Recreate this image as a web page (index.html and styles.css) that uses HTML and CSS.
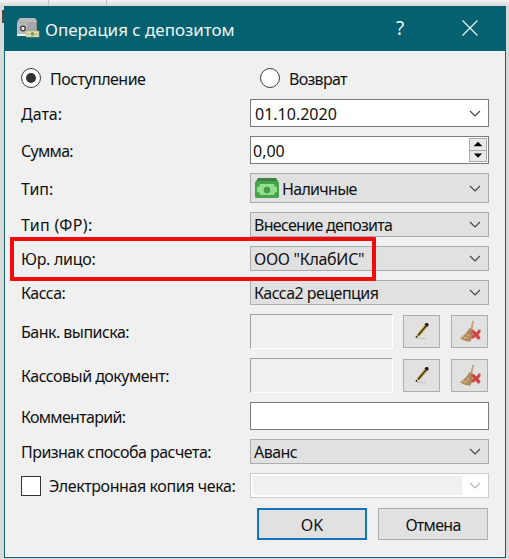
FILE: index.html
```
<!DOCTYPE html>
<html lang="ru">
<head>
<meta charset="utf-8">
<title>Операция с депозитом</title>
<link rel="stylesheet" href="styles.css">
</head>
<body>
<svg class="defs" width="0" height="0" aria-hidden="true">
  <symbol id="chevron" viewBox="0 0 12 7"><path d="M1 1l5 5 5-5" fill="none" stroke="currentColor" stroke-width="1.2"/></symbol>
  <symbol id="pencil" viewBox="0 0 20 20">
    <path d="M5 17.500h9" stroke="#c4c4c4" stroke-width="1"/>
    <path d="M4 16.500l1-3L13 3.500l2.500 2L7 15.500z" fill="#f5d66c"/>
    <path d="M5 13.500L13 4M7 15.500L15.500 6" stroke="#b19332" stroke-width=".6"/>
    <path d="M6 14.500L14 5" stroke="#2c2710" stroke-width="1.400"/>
    <path d="M12.500 3.500l1.500-1.500h1.500l1 1v1.500L15 6z" fill="#17191b"/>
    <path d="M3.500 17l.7-2.500 1.800 1.700z" fill="#202020"/>
  </symbol>
  <symbol id="broom" viewBox="0 0 22 23">
    <path d="M13.500.5l1.500.5-2 10-2-.5z" fill="#c4a078"/>
    <path d="M10.500 8l3.500 1.500c1 4-1 9-2.500 12-4 .5-8-1-10.500-3.500C5 15.500 8 12 10.500 8z" fill="#b99468"/>
    <path d="M11 10l-7 9M12 11l-5 10M13 12l-3 9" stroke="#96714a" stroke-width=".7" fill="none"/>
    <path d="M3 17l6 1M7 14l4 2" stroke="#dfbc87" stroke-width=".8"/>
    <path d="M12.500 9.500l3 1 2 2 2-3h2v3l-2 2 2 3-1 2h-2l-2-2.500-2 1.500h-2v-2.500l2-1.500-2-2.500z" fill="#d65050"/>
    <path d="M14 11l6 7M20.500 11l-7 6" stroke="#c23a3d" stroke-width="1"/>
  </symbol>
</svg>

<div class="backdrop"><i class="rule"></i><i class="rule"></i><i class="mark"></i></div>

<main class="dialog">
  <header class="titlebar">
    <svg class="safe" viewBox="0 0 24 24">
      <path d="M1 5l3-4h15l2 3v14l-2 1H1z" fill="#8f9493"/>
      <path d="M1 5l3-4h15l2 4z" fill="#b9bbba"/>
      <path d="M1 5h19v13H1z" fill="#a5a7a6"/>
      <path d="M1 6h10v11H1z" fill="#b9bbba"/>
      <path d="M1 18h9" stroke="#f0f0f0" stroke-width="2"/>
      <circle cx="7" cy="11.500" r="2.300" fill="#eee" stroke="#343638" stroke-width="1.300"/>
      <path d="M10 14h13v6H10z" fill="#dce0b3" stroke="#a8b27d" stroke-width=".6"/>
      <circle cx="16.500" cy="17" r="2" fill="#8b9a61"/><path d="M11.500 17h2M19.500 17h2" stroke="#8b9a61"/>
    </svg>
    <h1 class="title">Операция с депозитом</h1>
    <span class="help">?</span>
    <svg class="close" viewBox="0 0 16 16"><path d="M.5.5l15 15M15.500.5l-15 15" stroke="currentColor" stroke-width="1.200"/></svg>
  </header>

  <form class="form">
    <div class="row radios low">
      <div class="option"><span class="radio checked"></span><span class="text tight">Поступление</span></div>
      <div class="option"><span class="radio"></span><span class="text tighter">Возврат</span></div>
    </div>
    <div class="row low"><label>Дата:</label><div class="input date"><span class="text">01.10.2020</span><svg class="chev"><use href="#chevron"/></svg></div></div>
    <div class="row low"><label class="tighter">Сумма:</label><div class="input sum"><span class="text">0,00</span>
      <div class="spinner"><svg viewBox="0 0 18 12"><path d="M9 3L4 8h10z"/></svg><svg viewBox="0 0 18 12"><path d="M9 8L4 3h10z"/></svg></div></div></div>
    <div class="row low"><label>Тип:</label><div class="select tall">
      <svg class="cash" viewBox="0 0 24 20"><path d="M3 0h18l3 5v3H0V5z" fill="#3c813e"/><path d="M1 3h22l1 3v13l-1 1H1l-1-1V6z" fill="#45a34b"/><path d="M5 6h14q0 3 3 3v5q-3 0-3 3H5q0-3-3-3V9q3 0 3-3z" fill="#91dc8d"/><circle cx="12" cy="12" r="3.200" fill="#43984a"/></svg>
      <span class="text tighter">Наличные</span><svg class="chev"><use href="#chevron"/></svg></div></div>
    <div class="row"><label class="loose">Тип (ФР):</label><div class="select"><span class="text tighter">Внесение депозита</span><svg class="chev"><use href="#chevron"/></svg></div></div>
    <div class="row marked"><label class="snug">Юр. лицо:</label><div class="select"><span class="text snug">ООО "КлабИС"</span><svg class="chev"><use href="#chevron"/></svg></div></div>
    <div class="row"><label class="tight">Касса:</label><div class="select"><span class="text tight">Касса2 рецепция</span><svg class="chev"><use href="#chevron"/></svg></div></div>
    <div class="row"><label class="tight">Банк. выписка:</label><div class="document"><div class="well"></div>
      <div class="tool"><svg class="pencil"><use href="#pencil"/></svg></div><div class="tool"><svg class="broom"><use href="#broom"/></svg></div></div></div>
    <div class="row"><label class="tight">Кассовый документ:</label><div class="document"><div class="well"></div>
      <div class="tool"><svg class="pencil"><use href="#pencil"/></svg></div><div class="tool"><svg class="broom"><use href="#broom"/></svg></div></div></div>
    <div class="row low"><label class="tighter">Комментарий:</label><div class="input"></div></div>
    <div class="row"><label class="tight">Признак способа расчета:</label><div class="select"><span class="text tight">Аванс</span><svg class="chev"><use href="#chevron"/></svg></div></div>
    <div class="row"><div class="check"><span class="box"></span><label class="snug copy">Электронная копия чека:</label></div><div class="select disabled"><span class="blank"></span><svg class="chev"><use href="#chevron"/></svg></div></div>
    <div class="actions low"><div class="button primary"><span class="text">OK</span></div><div class="button"><span class="text tighter">Отмена</span></div></div>
  </form>
</main>
</body>
</html>
```
FILE: styles.css
```
*, *::before, *::after { box-sizing: border-box; }
body {
  margin: 0; width: 509px; height: 559px; overflow: hidden; position: relative;
  padding: 6px 3px 1px 4px; background: #d9dada;
  font: 16px/20px "Noto Sans", "Open Sans", sans-serif; color: #111;
}
.defs { position: absolute; }
.backdrop { position: absolute; left: 0; top: 0; width: 509px; height: 6px; display: flex; background: linear-gradient(#f4f4f4, #d8d8d8); }
.rule { width: 1px; height: 6px; margin-left: 48px; background: #c5c5c5; }
.rule + .rule { margin-left: 57px; }
.mark { position: absolute; left: 2px; top: 10px; width: 2px; height: 13px; background: #603f32; }
.dialog { position: relative; width: 502px; height: 552px; border: 1px solid #176071; background: #f0f0f0; }
.titlebar { display: flex; align-items: center; height: 45px; margin: -1px -1px 0; padding-left: 12px; background: #05616f; color: #eef6f7; }
.safe { width: 24px; height: 24px; margin-top: 1px; }
.title { margin: 3px 0 0 5px; font-size: 17px; font-weight: 400; letter-spacing: -.03px; width: 344px; white-space: nowrap; }
.help { width: 14px; font-size: 19px; text-align: center; margin: -2px 0 0 4px; }
.close { width: 16px; height: 16px; margin: -2px 0 0 55px; }
.form { display: flex; flex-direction: column; gap: 9px; padding: 17px 16px 0; }
.row { display: grid; grid-template-columns: 229px 239px; align-items: center; position: relative; }
.row label, .text { white-space: nowrap; }
.low label, .low .text { padding-top: 2px; }
.snug { letter-spacing: -.3px; }
.copy { letter-spacing: -.41px; }
.tight { letter-spacing: -.53px; }
.tighter { letter-spacing: -.7px; }
.loose { letter-spacing: .35px; }
.radios { margin-bottom: 2px; }
.option { display: flex; align-items: center; height: 20px; gap: 9px; }
.option:last-child { padding-left: 10px; }
.radio { width: 20px; height: 20px; border: 1px solid #3d3d3d; border-radius: 50%; background: #fff; flex: none; }
.checked { padding: 4px; }
.checked::after { content: ""; display: block; width: 10px; height: 10px; border-radius: 50%; background: #333; }
.input, .select { display: flex; align-items: center; height: 28px; border: 1px solid #7a7a7a; background: #fff; padding: 0 7px 0 4px; }
.select { height: 25px; border-color: #acacac; background: #e1e1e1; padding-left: 3px; }
.tall { height: 30px; }
.sum { padding: 0 1px 0 2px; }
.chev { width: 12px; height: 7px; margin-left: auto; color: #454545; flex: none; }
.spinner { width: 18px; height: 24px; margin-left: auto; display: grid; grid-template-rows: 11px 11px; background: #e9e9e9; border: 1px solid #aaa; }
.spinner svg { width: 16px; height: 11px; }
.spinner svg + svg { border-top: 1px solid #aaa; }
.cash { width: 24px; height: 20px; margin: 0 3px 0 1px; }
.marked::after { content: ""; position: absolute; z-index: 2; left: -11px; top: -9px; width: 366px; height: 44px; border: 4px solid #f20a0c; border-radius: 1px; }
.document { display: flex; align-items: center; height: 35px; }
.well { width: 143px; height: 35px; border: 1px solid; border-color: #a0a0a0 #fff #fff #a0a0a0; margin-right: 10px; }
.tool { width: 37px; height: 33px; border: 1px solid #adadad; background: #e1e1e1; display: flex; align-items: center; justify-content: center; }
.tool + .tool { margin-left: 11px; }
.pencil { width: 20px; height: 20px; margin-top: -2px; }
.broom { width: 22px; height: 23px; margin-top: -1px; }
.check { display: flex; align-items: center; gap: 8px; }
.box { width: 20px; height: 20px; border: 1px solid #333; background: #fff; }
.disabled { background: #fff; border-color: #ccc; padding-left: 2px; }
.disabled .chev { color: #b4b4b4; }
.blank { width: 209px; height: 19px; background: #f0f0f0; }
.actions { display: flex; gap: 11px; margin: 1px 0 0 236px; }
.button { width: 110px; height: 32px; border: 1px solid #adadad; background: #e1e1e1; display: flex; align-items: center; justify-content: center; }
.primary { border: 2px solid #1274c4; }
```
